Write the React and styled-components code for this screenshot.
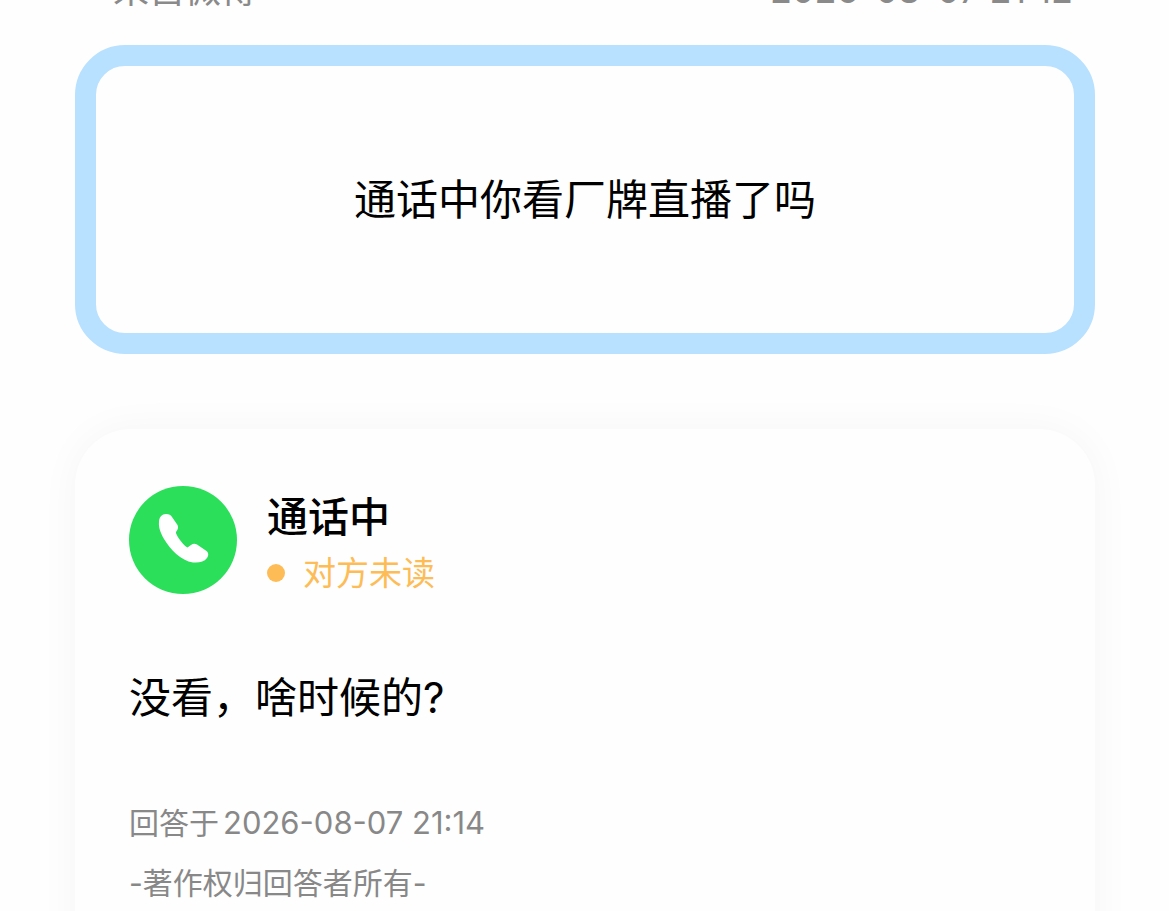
import React from "react";
import styled, { createGlobalStyle } from "styled-components";

const GlobalStyle = createGlobalStyle`
  *, *::before, *::after { box-sizing: border-box; }
  body {
    margin: 0;
    background: #fefefe;
    color: #000;
    font-family: Inter, "Noto Sans CJK SC", sans-serif;
  }
  h2, p { margin: 0; font-weight: 400; }
`;

const Page = styled.div`
  display: flex;
  flex-direction: column;
  height: 100vh;
  overflow: hidden;
  padding: 0 74px 0 75px;
`;

const SourceBar = styled.header`
  display: flex;
  justify-content: space-between;
  align-items: flex-end;
  flex: none;
  height: 11px;
  margin-bottom: 34px;
  padding: 0 22px 0 38px;
  font-size: 36px;
  line-height: 42px;
  color: #8a8a8a;
`;

const Main = styled.main`
  display: flex;
  flex-direction: column;
  flex: 1 0 auto;
`;

const Question = styled.section`
  display: flex;
  align-items: center;
  justify-content: center;
  flex: none;
  min-height: 309px;
  padding: 40px;
  border: 21px solid #b8e0ff;
  border-radius: 50px;
  background: #fefefe;
`;

const MessageText = styled.p`
  font-size: 42px;
  line-height: 60px;
`;

const AnswerCard = styled.article`
  flex: 1 0 auto;
  margin-top: 75px;
  padding: 57px 54px;
  border-radius: 56px 56px 0 0;
  background: #fefefe;
  box-shadow: 0 0 40px rgba(0, 0, 0, 0.04);
`;

const Profile = styled.header`
  display: flex;
  align-items: flex-start;
  gap: 30px;
  margin-bottom: 70px;
`;

const Avatar = styled.svg`
  display: block;
  flex: none;
  width: 108px;
  height: 108px;
`;

const Name = styled.h2`
  font-size: 41px;
  font-weight: 500;
  line-height: 62px;
`;

const Status = styled.p`
  display: flex;
  align-items: center;
  gap: 18px;
  font-size: 33px;
  line-height: 50px;
  color: #fdbc55;
`;

const Dot = styled.span`
  width: 18px;
  height: 18px;
  border-radius: 50%;
  background: currentColor;
`;

const Notes = styled.footer`
  display: grid;
  gap: 16px;
  margin-top: 73px;
  font-size: 30px;
  line-height: 44px;
  color: #888;
`;

const AnswerDate = styled.time`
  margin-left: 4px;
  font-size: 31px;
`;

export default function App() {
  return (
    <>
      <GlobalStyle />
      <Page>
        <SourceBar>
          <span>来自微博</span>
          <time dateTime="2026-08-07T21:12">2026-08-07 21:12</time>
        </SourceBar>
        <Main>
          <Question>
            <MessageText>通话中你看厂牌直播了吗</MessageText>
          </Question>
          <AnswerCard>
            <Profile>
              <Avatar viewBox="0 0 108 108" aria-hidden="true">
                <circle cx="54" cy="54" r="54" fill="#2bdf5a" />
                <path
                  fill="#fff"
                  d="M30 36C30 31 33 28 37 28C40 28 42 29 43 31L48.500 39C49.500 41 49 43 48 44.500L47 46C46 48 55 60 58.500 61.500L62 59C64 57.500 66 57.500 68 58.500L77.500 65C80 67 79.500 70 78 72C75 76 70 77 64 76.500C52 75 41 63 35 53C31 46 29.500 41 30 36Z"
                />
              </Avatar>
              <div>
                <Name>通话中</Name>
                <Status>
                  <Dot />
                  对方未读
                </Status>
              </div>
            </Profile>
            <MessageText>没看，啥时候的?</MessageText>
            <Notes>
              <p>
                回答于
                <AnswerDate dateTime="2026-08-07T21:14">2026-08-07 21:14</AnswerDate>
              </p>
              <p>-著作权归回答者所有-</p>
            </Notes>
          </AnswerCard>
        </Main>
      </Page>
    </>
  );
}
